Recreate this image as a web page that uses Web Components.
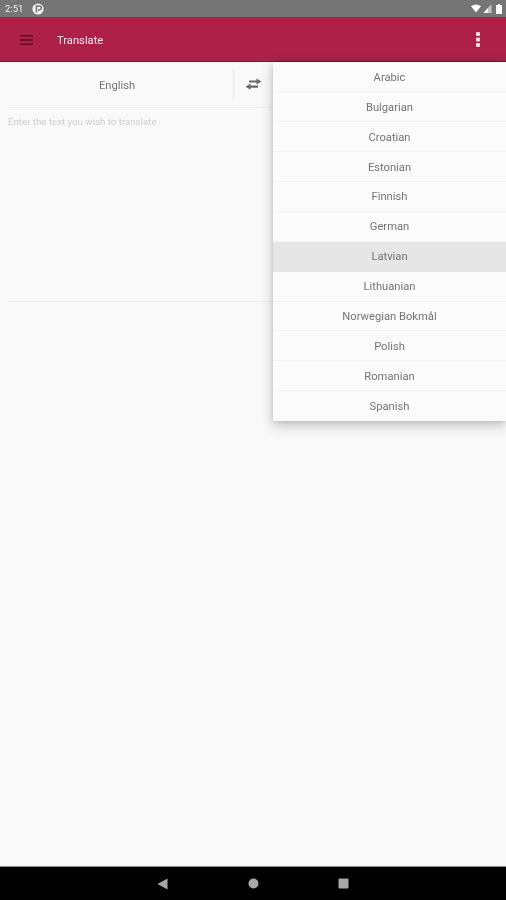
<!DOCTYPE html>
<html>
<head>
<meta charset="utf-8">
<title>Translate</title>
<style>
  html, body { margin: 0; height: 100%; background: #f9f9f9; }
  body { font-family: Roboto, "Liberation Sans", sans-serif; }
</style>
</head>
<body>
<translate-app>
  <status-bar slot="status"></status-bar>
  <app-toolbar slot="toolbar">Translate</app-toolbar>
  <translate-panel slot="main">
    <language-menu slot="menu">
      <menu-row>Arabic</menu-row>
      <menu-row>Bulgarian</menu-row>
      <menu-row>Croatian</menu-row>
      <menu-row>Estonian</menu-row>
      <menu-row>Finnish</menu-row>
      <menu-row>German</menu-row>
      <menu-row selected>Latvian</menu-row>
      <menu-row>Lithuanian</menu-row>
      <menu-row>Norwegian Bokmål</menu-row>
      <menu-row>Polish</menu-row>
      <menu-row>Romanian</menu-row>
      <menu-row last>Spanish</menu-row>
    </language-menu>
  </translate-panel>
  <nav-bar slot="nav"></nav-bar>
</translate-app>

<script>
function define(tag, html) {
  customElements.define(tag, class extends HTMLElement {
    constructor() {
      super();
      this.attachShadow({ mode: 'open' });
      this.shadowRoot.innerHTML = html;
    }
  });
}

define('translate-app', `
  <style>
    /* the reference is an upscaled capture, everything in it is a little soft */
    :host { display: flex; flex-direction: column; height: 900px; width: 506px; overflow: hidden; filter: blur(.45px); }
    .main { flex: 1; display: flex; min-height: 0; }
  </style>
  <slot name="status"></slot>
  <slot name="toolbar"></slot>
  <div class="main"><slot name="main"></slot></div>
  <slot name="nav"></slot>
`);

define('status-bar', `
  <style>
    :host { display: flex; align-items: center; height: 17px; background: #757575; padding: 0 4px 0 5px; color: #fff; font-size: 9.5px; }
    .time { margin-right: 9px; opacity: .9; }
    .right { margin-left: auto; display: flex; align-items: center; gap: 2px; }
    svg { display: block; }
  </style>
  <span class="time">2:51</span>
  <svg width="12" height="12" viewBox="0 0 12 12">
    <circle cx="6" cy="6" r="5.6" fill="#f2f2f2"/>
    <path d="M4.400 9.400V3h3a1.900 1.900 0 0 1 0 3.900H5.800" fill="none" stroke="#757575" stroke-width="1.500"/>
  </svg>
  <div class="right">
    <svg width="10" height="9" viewBox="0 0 11 9"><path d="M0 2Q5.500-1.600 11 2L5.500 9z" fill="#fff"/></svg>
    <svg width="9" height="9" viewBox="0 0 8 9"><path d="M8 0v9H0z" fill="#c4c4c4"/><path d="M4.500 4v5H0z" fill="#fff"/></svg>
    <svg style="margin-left:2px" width="6" height="10" viewBox="0 0 6 10"><path d="M2 0h2v1h1.400q.6 0 .6.6V9.400q0 .6-.6.6H.6Q0 10 0 9.400V1.600Q0 1 .6 1H2z" fill="#fff"/></svg>
  </div>
`);

define('app-toolbar', `
  <style>
    :host { display: flex; align-items: center; box-sizing: border-box; height: 45px; padding-top: 1px; background: #ad2148; border-bottom: 1px solid #8e0d33; color: #fff; font-size: 11.2px; }
    .menu { width: 57px; display: flex; padding-left: 20px; box-sizing: border-box; }
    .title { flex: 1; color: #fbe4ea; padding-top: 1px; }
    .more { width: 56px; display: flex; justify-content: center; }
    svg { display: block; }
  </style>
  <div class="menu">
    <svg width="13" height="10" viewBox="0 0 13 10"><path d="M0 0h13v1.600H0zM0 4.200h13v1.600H0zM0 8.400h13v1.600H0z" fill="#5c0a22"/></svg>
  </div>
  <div class="title"><slot></slot></div>
  <div class="more">
    <svg width="4" height="15" viewBox="0 0 4 15"><rect y="0" width="4" height="4" rx="1" fill="#f6dbe3"/><rect y="5.500" width="4" height="4" rx="1" fill="#f6dbe3"/><rect y="11" width="4" height="4" rx="1" fill="#f6dbe3"/></svg>
  </div>
`);

define('translate-panel', `
  <style>
    :host { display: block; position: relative; flex: 1; background: #f9f9f9; color: #757575; font-size: 11.2px; }
    .langs { display: flex; height: 46px; box-sizing: border-box; margin: 0 0 0 8px; border-bottom: 1px solid #eeeeee; }
    .from { width: 218px; display: flex; align-items: center; justify-content: center; margin-top: 1px; }
    .swap { width: 38px; display: flex; align-items: center; justify-content: center; margin: 8px 0 7px 7px; padding-bottom: 3px; border-left: 1px solid #e9e9e9; }
    .input { height: 194px; box-sizing: border-box; margin-left: 8px; margin-right: 8px; padding-top: 8px; border-bottom: 1px solid #f0f0f0; color: #cdcdcd; font-size: 9.7px; }
    svg { display: block; }
  </style>
  <div class="langs">
    <div class="from">English</div>
    <div class="swap">
      <svg width="17" height="12" viewBox="0 0 17 12"><path d="M11.500 0.500l5 3-5 3V4.600H4V2.400h7.500zM5.500 5.500v2h7.500v2.200H5.500v2l-5-3z" fill="#6b6b6b"/></svg>
    </div>
  </div>
  <div class="input">Enter the text you wish to translate</div>
  <slot name="menu"></slot>
`);

define('language-menu', `
  <style>
    :host { display: block; position: absolute; top: 0; left: 273px; right: 0; padding-top: .4px; background: #fbfbfb; box-shadow: 0 4px 12px rgba(0,0,0,.24), 0 0 5px rgba(0,0,0,.1); }
  </style>
  <slot></slot>
`);

define('menu-row', `
  <style>
    :host { display: flex; align-items: center; justify-content: center; box-sizing: border-box; height: 29.9px; padding-top: 1px; border-bottom: 1px solid #f2f2f2; color: #757575; font-size: 11.2px; }
    :host([selected]) { background: #e6e6e6; border-bottom-color: #e6e6e6; }
    :host([last]) { border-bottom: 0; }
  </style>
  <slot></slot>
`);

define('nav-bar', `
  <style>
    :host { display: flex; align-items: center; justify-content: center; gap: 79.500px; height: 34px; background: #000; border-top: 1px solid #8a8a8a; box-sizing: border-box; }
    svg { display: block; }
  </style>
  <svg width="11" height="12" viewBox="0 0 11 12"><path d="M0.500 6L10.500 0.500V11.500z" fill="#a8a8a8"/></svg>
  <svg width="11" height="11" viewBox="0 0 11 11"><circle cx="5.500" cy="5.500" r="5" fill="#a8a8a8"/></svg>
  <svg width="11" height="11" viewBox="0 0 11 11"><rect x=".5" y=".5" width="10" height="10" rx="1" fill="#a8a8a8"/></svg>
`);
</script>
</body>
</html>
